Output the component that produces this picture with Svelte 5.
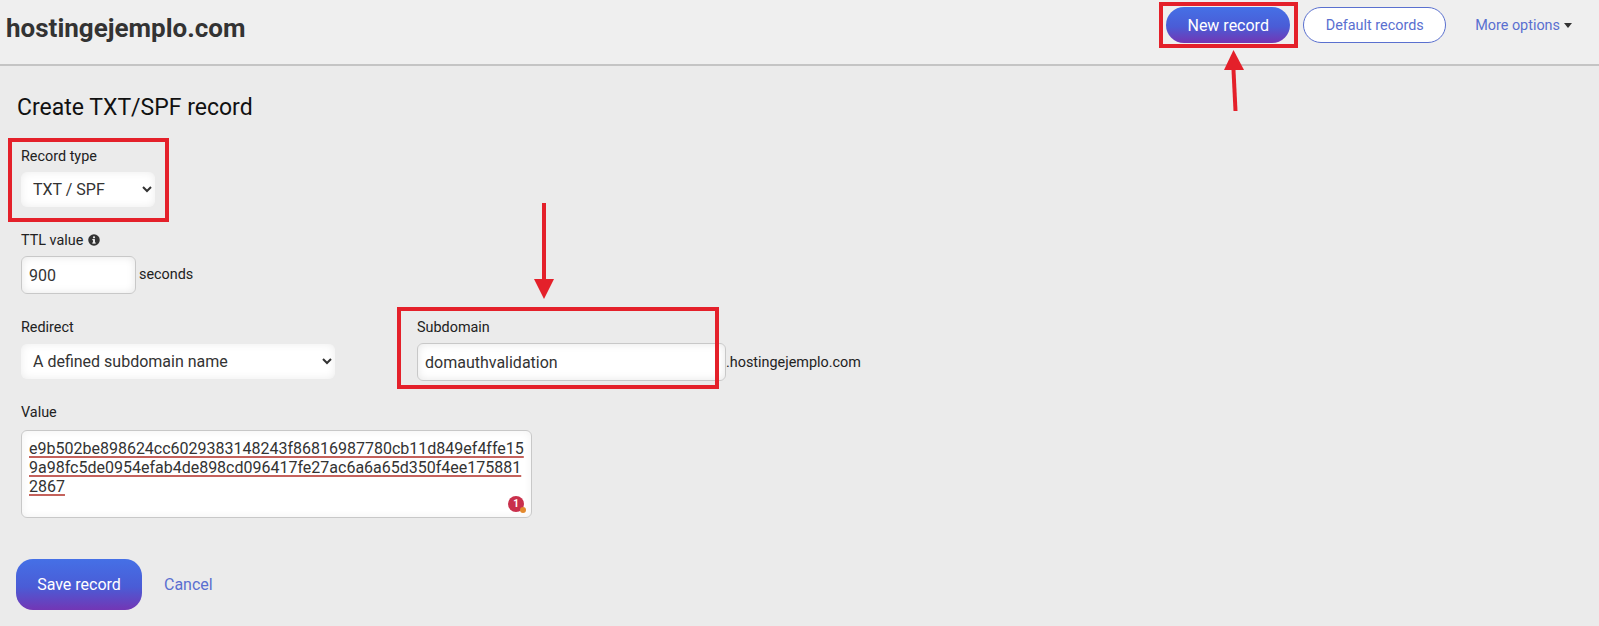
<script>
  const value = "e9b502be898624cc6029383148243f86816987780cb11d849ef4ffe159a98fc5de0954efab4de898cd096417fe27ac6a6a65d350f4ee1758812867";
</script>

<header class="topbar">
  <h1>hostingejemplo.com</h1>
  <nav class="actions">
    <button class="btn-new">New record</button>
    <button class="btn-outline">Default records</button>
    <a class="more" href="#more">More options<span class="caret"></span></a>
  </nav>
</header>

<main class="content">
  <h2>Create TXT/SPF record</h2>

  <div class="field type-field">
    <label for="type">Record type</label>
    <select id="type" class="sel-type">
      <option>TXT / SPF</option>
    </select>
  </div>

  <div class="field ttl-field">
    <label for="ttl">TTL value
      <svg class="info" viewBox="0 0 16 16" width="14" height="14" aria-hidden="true">
        <circle cx="8" cy="8" r="6.6" fill="#333" />
        <rect x="6.9" y="7" width="2.2" height="4.6" fill="#eee" />
        <rect x="6" y="10.8" width="4" height="1.3" fill="#eee" />
        <rect x="6" y="7" width="2" height="1.2" fill="#eee" />
        <circle cx="8" cy="4.9" r="1.25" fill="#eee" />
      </svg>
    </label>
    <div class="inline">
      <input id="ttl" class="input ttl" value="900" />
      <span class="suffix">seconds</span>
    </div>
  </div>

  <div class="row">
    <div class="field redirect-field">
      <label for="redirect">Redirect</label>
      <select id="redirect" class="sel-redirect">
        <option>A defined subdomain name</option>
      </select>
    </div>
    <div class="field sub-field">
      <label for="sub">Subdomain</label>
      <div class="inline">
        <input id="sub" class="input sub" value="domauthvalidation" />
        <span class="domain">.hostingejemplo.com</span>
      </div>
    </div>
  </div>

  <div class="field value-field">
    <label for="value">Value</label>
    <div id="value" class="textarea">
      <span class="spell">{value}</span>
      <span class="badge">1<i></i></span>
    </div>
  </div>

  <div class="form-actions">
    <button class="btn-save">Save record</button>
    <a class="cancel" href="#cancel">Cancel</a>
  </div>
</main>

<!-- annotations drawn over the screenshot -->
<div class="mark mark-new"></div>
<div class="mark mark-type"></div>
<div class="mark mark-sub"></div>
<svg class="arrows" width="1599" height="626" aria-hidden="true">
  <path d="M1235.5 111 L1233.5 70" stroke="#e4202a" stroke-width="4" fill="none" />
  <path d="M1233.5 50 L1224 70 L1244 70 Z" fill="#e4202a" />
  <path d="M544 203 L544 280" stroke="#e4202a" stroke-width="4" fill="none" />
  <path d="M534 279 L554 279 L544 299 Z" fill="#e4202a" />
</svg>

<style>
  :global(body) {
    margin: 0;
    background: #ebebeb;
    font-family: Roboto, "Liberation Sans", sans-serif;
    color: #111;
  }

  .topbar {
    height: 64px;
    display: flex;
    align-items: flex-start;
    justify-content: space-between;
    background: #efefef;
    border-bottom: 2px solid #c4c4c4;
    padding-left: 6px;
  }

  h1 {
    margin: 13px 0 0;
    font-size: 26px;
    line-height: 30px;
    font-weight: 700;
    color: #333;
  }

  .actions {
    display: flex;
    align-items: center;
    margin-top: 7px;
    height: 36px;
  }

  button {
    font-family: inherit;
    cursor: pointer;
  }

  .btn-new {
    width: 124px;
    height: 36px;
    border: none;
    border-radius: 18px;
    font-size: 16px;
    color: #fff;
    background: linear-gradient(180deg, #4570e6 0%, #4a5cd6 55%, #7336b4 100%);
  }

  .btn-outline {
    width: 143px;
    height: 36px;
    margin-left: 13px;
    border: 1px solid #5a70cf;
    border-radius: 18px;
    background: #fff;
    color: #5a6fd0;
    font-size: 14.4px;
  }

  .more {
    margin-left: 29px;
    margin-right: 27px;
    font-size: 14.4px;
    color: #5a6fd0;
    text-decoration: none;
    display: flex;
    align-items: center;
  }

  .caret {
    width: 0;
    height: 0;
    margin-left: 4px;
    border-left: 4px solid transparent;
    border-right: 4px solid transparent;
    border-top: 5px solid #333;
  }

  .content {
    padding: 28px 0 0 17px;
  }

  h2 {
    margin: 0;
    font-size: 23px;
    line-height: 27px;
    font-weight: 400;
    color: #111;
  }

  .field label {
    display: block;
    font-size: 14.4px;
    line-height: 16px;
    color: #222;
  }

  .type-field {
    margin: 28px 0 0 4px;
  }

  select {
    display: block;
    border: none;
    border-radius: 6px;
    background-color: #fff;
    box-shadow: inset 0 0 8px rgba(0, 0, 0, 0.08);
    font-family: inherit;
    font-size: 16px;
    color: #333;
    padding: 0 8px;
  }

  .sel-type {
    margin-top: 7px;
    width: 134px;
    height: 35px;
  }

  .ttl-field {
    margin: 26px 0 0 4px;
  }

  .info {
    vertical-align: -2px;
  }

  .inline {
    display: flex;
    align-items: center;
  }

  .input {
    box-sizing: border-box;
    border: 1px solid #c8c8c8;
    border-radius: 6px;
    background: #fff;
    box-shadow: inset 0 0 8px rgba(0, 0, 0, 0.1);
    font-family: inherit;
    font-size: 16px;
    color: #333;
    padding: 0 7px;
  }

  .ttl {
    margin-top: 7px;
    width: 115px;
    height: 38px;
  }

  .suffix {
    margin: 6px 0 0 3px;
    font-size: 14.4px;
    color: #222;
  }

  .row {
    display: flex;
    margin-top: 26px;
  }

  .redirect-field {
    margin-left: 4px;
    width: 396px;
  }

  .sel-redirect {
    margin-top: 8px;
    width: 314px;
    height: 35px;
    padding: 0 8px;
  }

  .sub-field .inline {
    margin-top: 7px;
  }

  .sub {
    width: 309px;
    height: 38px;
  }

  .domain {
    font-size: 14.4px;
    color: #222;
  }

  .value-field {
    margin: 24px 0 0 4px;
  }

  .textarea {
    position: relative;
    box-sizing: border-box;
    margin-top: 9px;
    width: 511px;
    height: 88px;
    padding: 8px 7px 0;
    border: 1px solid #c8c8c8;
    border-radius: 6px;
    background: #fff;
    box-shadow: inset 0 0 8px rgba(0, 0, 0, 0.06);
    font-size: 16px;
    line-height: 19px;
    color: #333;
    word-break: break-all;
  }

  .spell {
    text-decoration: underline 2px #c4625c;
    text-underline-offset: 2px;
    text-decoration-skip-ink: none;
  }

  .badge {
    position: absolute;
    right: 7px;
    bottom: 5px;
    width: 16px;
    height: 16px;
    border-radius: 50%;
    background: #c9304c;
    color: #fff;
    font-size: 10px;
    font-weight: 700;
    line-height: 16px;
    text-align: center;
  }

  .badge i {
    position: absolute;
    right: -2px;
    bottom: -1px;
    width: 6px;
    height: 6px;
    border-radius: 50%;
    background: #e38a2e;
  }

  .form-actions {
    display: flex;
    align-items: center;
    margin: 41px 0 0 -1px;
  }

  .btn-save {
    width: 126px;
    height: 51px;
    border: none;
    border-radius: 17px;
    font-size: 16px;
    color: #fff;
    background: linear-gradient(180deg, #4570e6 0%, #4a5cd6 55%, #7336b4 100%);
  }

  .cancel {
    margin-left: 22px;
    font-size: 16px;
    color: #5a6fd0;
    text-decoration: none;
  }

  .mark {
    position: absolute;
    box-sizing: border-box;
    border: 4px solid #e4202a;
    pointer-events: none;
  }

  .mark-new {
    left: 1159px;
    top: 2px;
    width: 139px;
    height: 46px;
  }

  .mark-type {
    left: 8px;
    top: 138px;
    width: 161px;
    height: 84px;
  }

  .mark-sub {
    left: 397px;
    top: 307px;
    width: 322px;
    height: 82px;
  }

  .arrows {
    position: absolute;
    left: 0;
    top: 0;
    pointer-events: none;
  }
</style>
